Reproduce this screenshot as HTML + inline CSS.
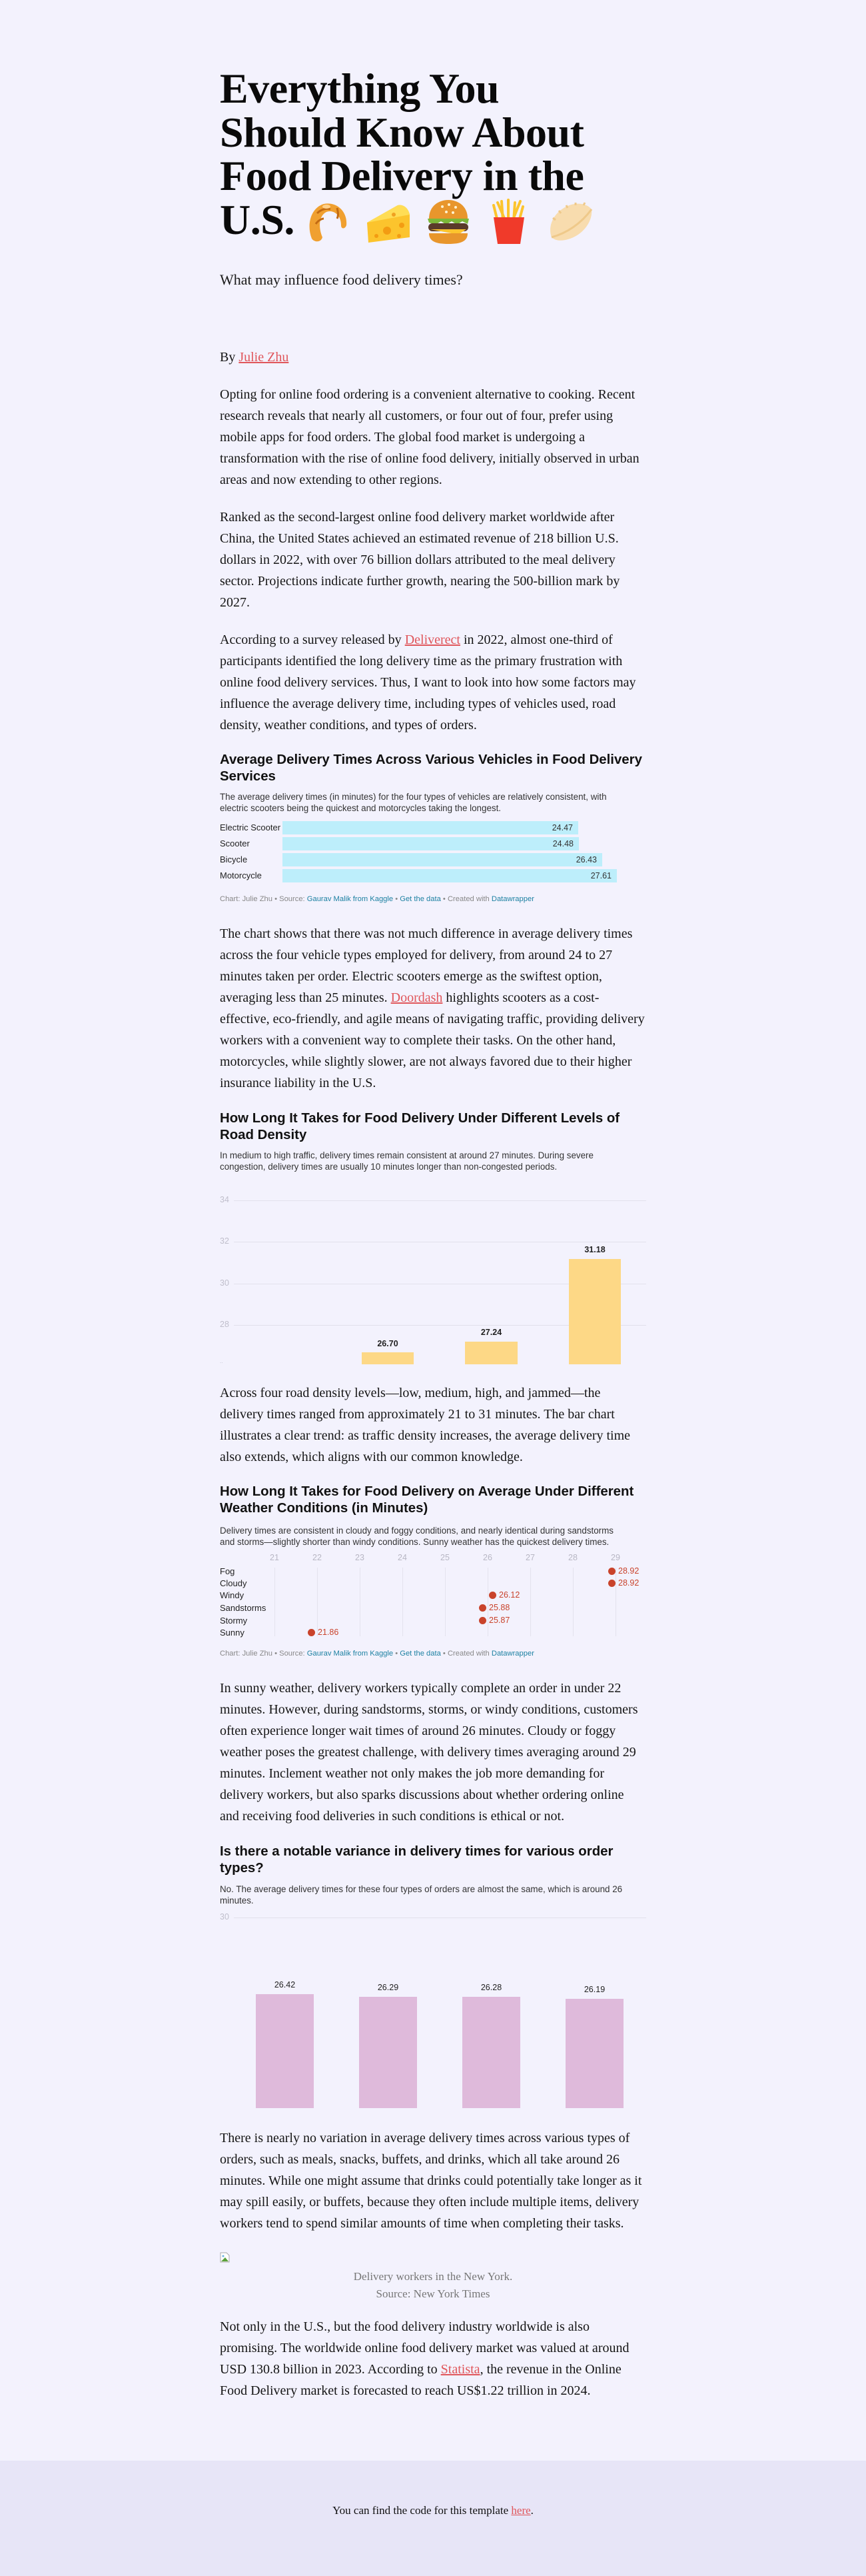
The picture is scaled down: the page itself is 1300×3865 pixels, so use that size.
<!DOCTYPE html>
<html><head><meta charset="utf-8">
<style>
*{margin:0;padding:0;box-sizing:border-box}
html,body{width:1300px;height:3865px;background:#f3f2fd;overflow:hidden}
body{position:relative;font-family:"Liberation Serif",serif;color:#111}
.a{position:absolute;white-space:nowrap}
.p{left:330px;font-size:20px;line-height:32px;color:#151515}
a{color:#e0565b;text-decoration:underline}
.t{left:330px;font-family:"Liberation Sans",sans-serif;font-weight:bold;font-size:20.4px;line-height:25px;color:#111}
.d{left:330px;font-family:"Liberation Sans",sans-serif;font-size:13.4px;line-height:17px;color:#333}
.c{left:330px;font-family:"Liberation Sans",sans-serif;font-size:11.2px;line-height:14px;color:#888}
.c span{color:#1d81a2}
.bar1{position:absolute;left:424px;height:20px;background:#bdeefb;text-align:right;padding-right:8px;font-family:"Liberation Sans",sans-serif;font-size:12.5px;line-height:20px;color:#333}
.lbl{position:absolute;left:330px;font-family:"Liberation Sans",sans-serif;font-size:13px;color:#222;white-space:nowrap}
.g{position:absolute;left:351px;width:619px;height:1px;background:#e2e1ec}
.gl{position:absolute;left:330px;font-family:"Liberation Sans",sans-serif;font-size:12.5px;color:#c0bfcc}
.yb{position:absolute;background:#fdd886}
.yv{position:absolute;font-family:"Liberation Sans",sans-serif;font-size:12.5px;font-weight:bold;color:#222;text-align:center}
.vg{position:absolute;top:2352px;height:103px;width:1px;background:#e4e3ee}
.ax{position:absolute;top:2330px;font-family:"Liberation Sans",sans-serif;font-size:12.5px;color:#b8b7c4;width:30px;margin-left:-15px;text-align:center}
.dot{position:absolute;width:11px;height:11px;border-radius:50%;background:#c9432b;margin-left:-5px;margin-top:-5px}
.dv{position:absolute;font-family:"Liberation Sans",sans-serif;font-size:12.5px;color:#c9432b;line-height:14px;margin-top:-7px}
.pb{position:absolute;background:#dfbadb;top:0}
.pv{position:absolute;font-family:"Liberation Sans",sans-serif;font-size:12.5px;color:#222;text-align:center;width:87px}
</style></head><body>

<div class="a" style="left:330px;top:100px;font-size:64px;line-height:65.5px;font-weight:bold;color:#0a0a0a;letter-spacing:-0.5px">Everything You<br>Should Know About<br>Food Delivery in the<br>U.S.</div>

<svg class="a" style="left:456px;top:298px" width="70" height="70" viewBox="0 0 70 70">
<path d="M12 60 C4 40 10 14 30 8 C50 4 66 20 64 40 C62 46 56 46 56 40 C56 24 44 16 34 20 C22 26 22 44 28 58 C26 66 16 66 12 60Z" fill="#f0a030"/>
<path d="M20 22 C26 16 34 14 40 16" stroke="#c26a12" stroke-width="3" fill="none"/>
<path d="M18 38 C22 32 28 30 30 30" stroke="#c26a12" stroke-width="3" fill="none"/>
<path d="M50 14 C52 22 52 26 50 30" stroke="#c26a12" stroke-width="3" fill="none"/>
<ellipse cx="34" cy="12" rx="6" ry="3" fill="#ffd08a"/>
</svg>
<svg class="a" style="left:547px;top:298px" width="72" height="70" viewBox="0 0 72 70">
<path d="M4 36 L50 10 C58 8 66 14 68 24 L68 58 L6 66 Z" fill="#fcc42d"/>
<path d="M4 36 L50 10 C58 8 66 14 68 24 Z" fill="#ffdd55"/>
<circle cx="34" cy="48" r="6" fill="#f39c12"/><circle cx="56" cy="40" r="4" fill="#f39c12"/><circle cx="18" cy="56" r="3" fill="#f39c12"/><circle cx="52" cy="56" r="3" fill="#f39c12"/><circle cx="44" cy="24" r="3" fill="#f0a020"/>
</svg>
<svg class="a" style="left:640px;top:298px" width="66" height="70" viewBox="0 0 66 70">
<path d="M4 30 C4 10 20 2 33 2 C46 2 62 10 62 30 Z" fill="#e8962c"/>
<circle cx="24" cy="12" r="2" fill="#fff3d0"/><circle cx="34" cy="9" r="2" fill="#fff3d0"/><circle cx="44" cy="13" r="2" fill="#fff3d0"/><circle cx="30" cy="20" r="2" fill="#fff3d0"/><circle cx="40" cy="21" r="2" fill="#fff3d0"/>
<path d="M2 30 L64 30 L62 38 L54 34 L46 39 L38 34 L30 39 L22 34 L14 39 L4 36 Z" fill="#7cb83a"/>
<rect x="3" y="37" width="60" height="12" rx="6" fill="#5a3a2a"/>
<path d="M6 46 L60 46 L48 54 Z" fill="#fcc42d"/>
<path d="M4 52 L62 52 C62 64 52 68 33 68 C14 68 4 64 4 52Z" fill="#e8962c"/>
</svg>
<svg class="a" style="left:733px;top:298px" width="62" height="70" viewBox="0 0 62 70">
<g stroke="#fcc42d" stroke-width="4" stroke-linecap="round">
<line x1="14" y1="34" x2="8" y2="10"/><line x1="22" y1="34" x2="20" y2="4"/><line x1="30" y1="34" x2="30" y2="2"/><line x1="38" y1="34" x2="40" y2="6"/><line x1="46" y1="34" x2="52" y2="12"/><line x1="26" y1="34" x2="14" y2="6"/><line x1="36" y1="34" x2="48" y2="4"/>
</g>
<path d="M8 28 L54 28 L48 68 L14 68 Z" fill="#f03a2a"/>
</svg>
<svg class="a" style="left:820px;top:300px" width="72" height="66" viewBox="0 0 72 66">
<path d="M8 56 C2 40 10 20 30 10 C46 2 62 6 68 14 C70 30 58 50 36 58 C24 62 14 62 8 56Z" fill="#f8dcae"/>
<path d="M8 56 C30 50 52 36 68 14" stroke="#efc98a" stroke-width="3" fill="none"/>
<path d="M14 30 l-4 -3 M22 20 l-3 -4 M32 12 l-2 -4 M44 8 l0 -4 M56 8 l2 -4" stroke="#efc98a" stroke-width="3"/>
</svg>

<div class="a" style="left:330px;top:405px;font-size:22px;line-height:30px;color:#1a1a1a">What may influence food delivery times?</div>
<div class="a p" style="top:520px">By <a>Julie Zhu</a></div>

<div class="a p" style="top:576px">Opting for online food ordering is a convenient alternative to cooking. Recent<br>research reveals that nearly all customers, or four out of four, prefer using<br>mobile apps for food orders. The global food market is undergoing a<br>transformation with the rise of online food delivery, initially observed in urban<br>areas and now extending to other regions.</div>

<div class="a p" style="top:760px">Ranked as the second-largest online food delivery market worldwide after<br>China, the United States achieved an estimated revenue of 218 billion U.S.<br>dollars in 2022, with over 76 billion dollars attributed to the meal delivery<br>sector. Projections indicate further growth, nearing the 500-billion mark by<br>2027.</div>

<div class="a p" style="top:944px">According to a survey released by <a>Deliverect</a> in 2022, almost one-third of<br>participants identified the long delivery time as the primary frustration with<br>online food delivery services. Thus, I want to look into how some factors may<br>influence the average delivery time, including types of vehicles used, road<br>density, weather conditions, and types of orders.</div>

<div class="a t" style="top:1128px">Average Delivery Times Across Various Vehicles in Food Delivery<br>Services</div>
<div class="a d" style="top:1187px">The average delivery times (in minutes) for the four types of vehicles are relatively consistent, with<br>electric scooters being the quickest and motorcycles taking the longest.</div>
<div class="lbl" style="top:1234px">Electric Scooter</div><div class="bar1" style="top:1232px;width:444px">24.47</div>
<div class="lbl" style="top:1258px">Scooter</div><div class="bar1" style="top:1256px;width:445px">24.48</div>
<div class="lbl" style="top:1282px">Bicycle</div><div class="bar1" style="top:1280px;width:480px">26.43</div>
<div class="lbl" style="top:1306px">Motorcycle</div><div class="bar1" style="top:1304px;width:502px">27.61</div>
<div class="a c" style="top:1342px">Chart: Julie Zhu • Source: <span>Gaurav Malik from Kaggle</span> • <span>Get the data</span> • Created with <span>Datawrapper</span></div>

<div class="a p" style="top:1385px">The chart shows that there was not much difference in average delivery times<br>across the four vehicle types employed for delivery, from around 24 to 27<br>minutes taken per order. Electric scooters emerge as the swiftest option,<br>averaging less than 25 minutes. <a>Doordash</a> highlights scooters as a cost-<br>effective, eco-friendly, and agile means of navigating traffic, providing delivery<br>workers with a convenient way to complete their tasks. On the other hand,<br>motorcycles, while slightly slower, are not always favored due to their higher<br>insurance liability in the U.S.</div>

<div class="a t" style="top:1666px">How Long It Takes for Food Delivery Under Different Levels of<br>Road Density</div>
<div class="a d" style="top:1725px">In medium to high traffic, delivery times remain consistent at around 27 minutes. During severe<br>congestion, delivery times are usually 10 minutes longer than non-congested periods.</div>
<div class="g" style="top:1801px"></div><div class="gl" style="top:1793px">34</div>
<div class="g" style="top:1863px"></div><div class="gl" style="top:1855px">32</div>
<div class="g" style="top:1926px"></div><div class="gl" style="top:1918px">30</div>
<div class="g" style="top:1988px"></div><div class="gl" style="top:1980px">28</div>
<div class="gl" style="top:2038px;font-size:8px">..</div>
<div class="yb" style="left:543px;top:2029px;width:78px;height:18px"></div>
<div class="yb" style="left:698px;top:2013px;width:79px;height:34px"></div>
<div class="yb" style="left:854px;top:1889px;width:78px;height:158px"></div>
<div class="yv" style="left:543px;top:2009px;width:78px">26.70</div>
<div class="yv" style="left:698px;top:1992px;width:79px">27.24</div>
<div class="yv" style="left:854px;top:1868px;width:78px">31.18</div>

<div class="a p" style="top:2074px">Across four road density levels—low, medium, high, and jammed—the<br>delivery times ranged from approximately 21 to 31 minutes. The bar chart<br>illustrates a clear trend: as traffic density increases, the average delivery time<br>also extends, which aligns with our common knowledge.</div>

<div class="a t" style="top:2226px">How Long It Takes for Food Delivery on Average Under Different<br>Weather Conditions (in Minutes)</div>
<div class="a d" style="top:2288px">Delivery times are consistent in cloudy and foggy conditions, and nearly identical during sandstorms<br>and storms—slightly shorter than windy conditions. Sunny weather has the quickest delivery times.</div>
<div class="ax" style="left:412px">21</div><div class="ax" style="left:476px">22</div><div class="ax" style="left:540px">23</div><div class="ax" style="left:604px">24</div><div class="ax" style="left:668px">25</div><div class="ax" style="left:732px">26</div><div class="ax" style="left:796px">27</div><div class="ax" style="left:860px">28</div><div class="ax" style="left:924px">29</div>
<div class="vg" style="left:412px"></div><div class="vg" style="left:476px"></div><div class="vg" style="left:540px"></div><div class="vg" style="left:604px"></div><div class="vg" style="left:668px"></div><div class="vg" style="left:732px"></div><div class="vg" style="left:796px"></div><div class="vg" style="left:860px"></div><div class="vg" style="left:924px"></div>
<div class="lbl" style="top:2350px">Fog</div>
<div class="lbl" style="top:2368px">Cloudy</div>
<div class="lbl" style="top:2386px">Windy</div>
<div class="lbl" style="top:2405px">Sandstorms</div>
<div class="lbl" style="top:2424px">Stormy</div>
<div class="lbl" style="top:2442px">Sunny</div>
<div class="dot" style="left:918px;top:2357px"></div><div class="dv" style="left:928px;top:2357px">28.92</div>
<div class="dot" style="left:918px;top:2375px"></div><div class="dv" style="left:928px;top:2375px">28.92</div>
<div class="dot" style="left:739px;top:2393px"></div><div class="dv" style="left:749px;top:2393px">26.12</div>
<div class="dot" style="left:724px;top:2412px"></div><div class="dv" style="left:734px;top:2412px">25.88</div>
<div class="dot" style="left:724px;top:2431px"></div><div class="dv" style="left:734px;top:2431px">25.87</div>
<div class="dot" style="left:467px;top:2449px"></div><div class="dv" style="left:477px;top:2449px">21.86</div>
<div class="a c" style="top:2474px">Chart: Julie Zhu • Source: <span>Gaurav Malik from Kaggle</span> • <span>Get the data</span> • Created with <span>Datawrapper</span></div>

<div class="a p" style="top:2517px">In sunny weather, delivery workers typically complete an order in under 22<br>minutes. However, during sandstorms, storms, or windy conditions, customers<br>often experience longer wait times of around 26 minutes. Cloudy or foggy<br>weather poses the greatest challenge, with delivery times averaging around 29<br>minutes. Inclement weather not only makes the job more demanding for<br>delivery workers, but also sparks discussions about whether ordering online<br>and receiving food deliveries in such conditions is ethical or not.</div>

<div class="a t" style="top:2766px">Is there a notable variance in delivery times for various order<br>types?</div>
<div class="a d" style="top:2826px">No. The average delivery times for these four types of orders are almost the same, which is around 26<br>minutes.</div>
<div class="g" style="top:2877px"></div><div class="gl" style="top:2869px">30</div>
<div class="pb" style="left:384px;top:2992px;width:87px;height:171px"></div>
<div class="pb" style="left:539px;top:2996px;width:87px;height:167px"></div>
<div class="pb" style="left:694px;top:2996px;width:87px;height:167px"></div>
<div class="pb" style="left:849px;top:2999px;width:87px;height:164px"></div>
<div class="pv" style="left:384px;top:2971px">26.42</div>
<div class="pv" style="left:539px;top:2975px">26.29</div>
<div class="pv" style="left:694px;top:2975px">26.28</div>
<div class="pv" style="left:849px;top:2978px">26.19</div>

<div class="a p" style="top:3192px">There is nearly no variation in average delivery times across various types of<br>orders, such as meals, snacks, buffets, and drinks, which all take around 26<br>minutes. While one might assume that drinks could potentially take longer as it<br>may spill easily, or buffets, because they often include multiple items, delivery<br>workers tend to spend similar amounts of time when completing their tasks.</div>

<svg class="a" style="left:330px;top:3379px" width="16" height="16" viewBox="0 0 16 16"><path d="M1 1 H10 L14 5 V15 H1 Z" fill="#fff" stroke="#aaa"/><path d="M2 14 L8 8 L13 14 Z" fill="#5aa03a"/><circle cx="5" cy="6" r="1.5" fill="#6ab0e0"/></svg>
<div class="a" style="left:330px;width:640px;top:3403px;font-size:17px;line-height:26px;color:#777;text-align:center">Delivery workers in the New York.<br>Source: New York Times</div>

<div class="a p" style="top:3475px">Not only in the U.S., but the food delivery industry worldwide is also<br>promising. The worldwide online food delivery market was valued at around<br>USD 130.8 billion in 2023. According to <a>Statista</a>, the revenue in the Online<br>Food Delivery market is forecasted to reach US$1.22 trillion in 2024.</div>

<div class="a" style="left:0;top:3692px;width:1300px;height:173px;background:#e7e5f7"></div>
<div class="a" style="left:0;width:1300px;top:3754px;font-size:17px;line-height:26px;text-align:center;color:#111">You can find the code for this template <a>here</a>.</div>

</body></html>
